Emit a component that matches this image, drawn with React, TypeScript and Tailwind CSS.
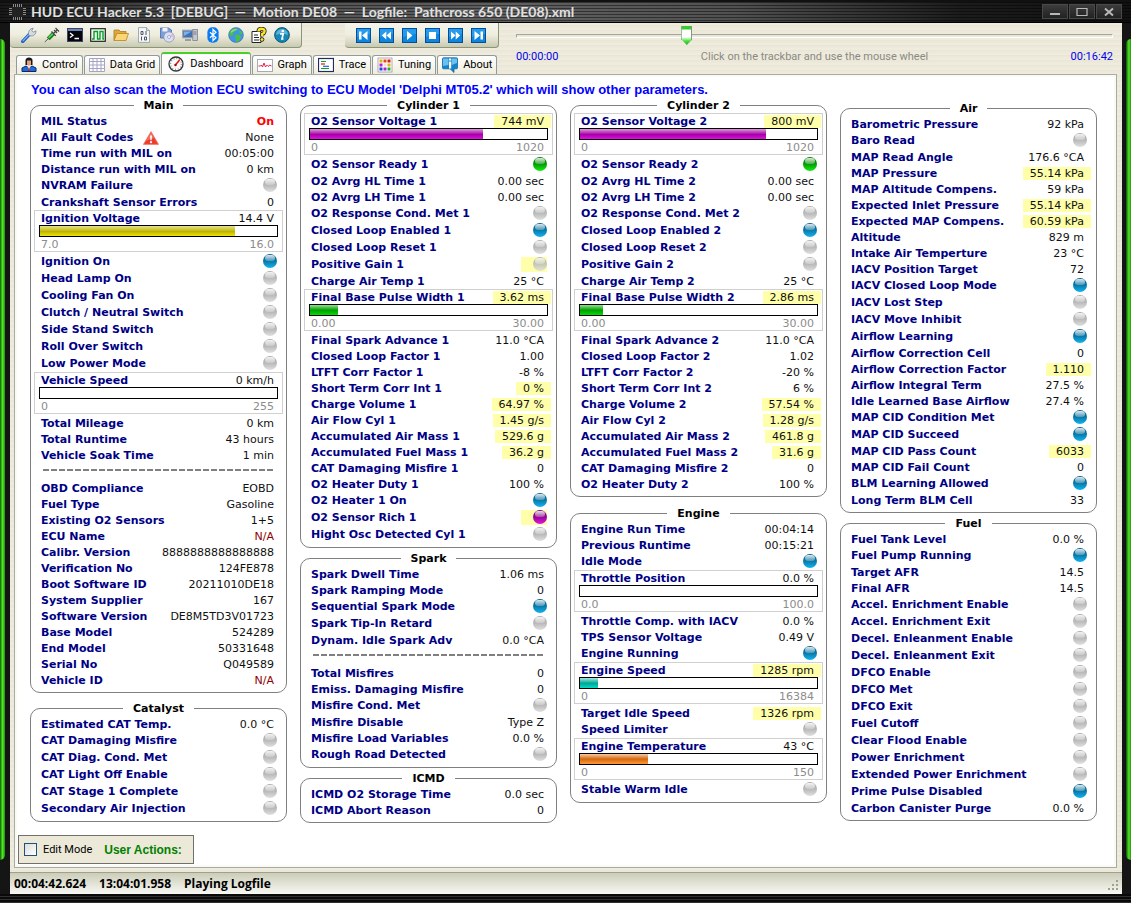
import { useState } from 'react';
import type { ReactNode } from 'react';

type LedColor = 'gray' | 'blue' | 'green' | 'purple';
type FillColor = 'yellow' | 'purple' | 'green' | 'teal' | 'orange';
type Tone = 'normal' | 'alert' | 'missing';

type Row =
  | { kind: 'text'; label: string; value: string; hot: boolean; tone: Tone; warn?: boolean }
  | { kind: 'led'; label: string; color: LedColor; hot: boolean }
  | { kind: 'bar'; label: string; value: string; min: string; max: string; percent: number; fill: FillColor; hot: boolean }
  | { kind: 'line' };

const text = (label: string, value: string, hot = false): Row => ({ kind: 'text', label, value, hot, tone: value === 'N/A' ? 'missing' : 'normal' });
const led = (label: string, color: LedColor = 'gray', hot = false): Row => ({ kind: 'led', label, color, hot });
const bar = (label: string, value: string, min: string, max: string, percent: number, fill: FillColor, hot = false): Row => ({ kind: 'bar', label, value, min, max, percent, fill, hot });
const line: Row = { kind: 'line' };

const main: Row[] = [
  { kind: 'text', label: 'MIL Status', value: 'On', hot: false, tone: 'alert' },
  { kind: 'text', label: 'All Fault Codes', value: 'None', hot: false, tone: 'normal', warn: true },
  text('Time run with MIL on', '00:05:00'),
  text('Distance run with MIL on', '0 km'),
  led('NVRAM Failure'),
  text('Crankshaft Sensor Errors', '0'),
  bar('Ignition Voltage', '14.4 V', '7.0', '16.0', 82.2, 'yellow'),
  led('Ignition On', 'blue'),
  led('Head Lamp On'),
  led('Cooling Fan On'),
  led('Clutch / Neutral Switch'),
  led('Side Stand Switch'),
  led('Roll Over Switch'),
  led('Low Power Mode'),
  bar('Vehicle Speed', '0 km/h', '0', '255', 0, 'green'),
  text('Total Mileage', '0 km'),
  text('Total Runtime', '43 hours'),
  text('Vehicle Soak Time', '1 min'),
  line,
  text('OBD Compliance', 'EOBD'),
  text('Fuel Type', 'Gasoline'),
  text('Existing O2 Sensors', '1+5'),
  text('ECU Name', 'N/A'),
  text('Calibr. Version', '8888888888888888'),
  text('Verification No', '124FE878'),
  text('Boot Software ID', '20211010DE18'),
  text('System Supplier', '167'),
  text('Software Version', 'DE8M5TD3V01723'),
  text('Base Model', '524289'),
  text('End Model', '50331648'),
  text('Serial No', 'Q049589'),
  text('Vehicle ID', 'N/A'),
];

const catalyst: Row[] = [
  text('Estimated CAT Temp.', '0.0 °C'),
  led('CAT Damaging Misfire'),
  led('CAT Diag. Cond. Met'),
  led('CAT Light Off Enable'),
  led('CAT Stage 1 Complete'),
  led('Secondary Air Injection'),
];

const cylinder1: Row[] = [
  bar('O2 Sensor Voltage 1', '744 mV', '0', '1020', 72.9, 'purple', true),
  led('O2 Sensor Ready 1', 'green'),
  text('O2 Avrg HL Time 1', '0.00 sec'),
  text('O2 Avrg LH Time 1', '0.00 sec'),
  led('O2 Response Cond. Met 1'),
  led('Closed Loop Enabled 1', 'blue'),
  led('Closed Loop Reset 1'),
  led('Positive Gain 1', 'gray', true),
  text('Charge Air Temp 1', '25 °C'),
  bar('Final Base Pulse Width 1', '3.62 ms', '0.00', '30.00', 12, 'green', true),
  text('Final Spark Advance 1', '11.0 °CA'),
  text('Closed Loop Factor 1', '1.00'),
  text('LTFT Corr Factor 1', '-8 %'),
  text('Short Term Corr Int 1', '0 %', true),
  text('Charge Volume 1', '64.97 %', true),
  text('Air Flow Cyl 1', '1.45 g/s', true),
  text('Accumulated Air Mass 1', '529.6 g', true),
  text('Accumulated Fuel Mass 1', '36.2 g', true),
  text('CAT Damaging Misfire 1', '0'),
  text('O2 Heater Duty 1', '100 %'),
  led('O2 Heater 1 On', 'blue'),
  led('O2 Sensor Rich 1', 'purple', true),
  led('Hight Osc Detected Cyl 1'),
];

const spark: Row[] = [
  text('Spark Dwell Time', '1.06 ms'),
  text('Spark Ramping Mode', '0'),
  led('Sequential Spark Mode', 'blue'),
  led('Spark Tip-In Retard'),
  text('Dynam. Idle Spark Adv', '0.0 °CA'),
  line,
  text('Total Misfires', '0'),
  text('Emiss. Damaging Misfire', '0'),
  led('Misfire Cond. Met'),
  text('Misfire Disable', 'Type Z'),
  text('Misfire Load Variables', '0.0 %'),
  led('Rough Road Detected'),
];

const icmd: Row[] = [text('ICMD O2 Storage Time', '0.0 sec'), text('ICMD Abort Reason', '0')];

const cylinder2: Row[] = [
  bar('O2 Sensor Voltage 2', '800 mV', '0', '1020', 78.4, 'purple', true),
  led('O2 Sensor Ready 2', 'green'),
  text('O2 Avrg HL Time 2', '0.00 sec'),
  text('O2 Avrg LH Time 2', '0.00 sec'),
  led('O2 Response Cond. Met 2'),
  led('Closed Loop Enabled 2', 'blue'),
  led('Closed Loop Reset 2'),
  led('Positive Gain 2'),
  text('Charge Air Temp 2', '25 °C'),
  bar('Final Base Pulse Width 2', '2.86 ms', '0.00', '30.00', 9.5, 'green', true),
  text('Final Spark Advance 2', '11.0 °CA'),
  text('Closed Loop Factor 2', '1.02'),
  text('LTFT Corr Factor 2', '-20 %'),
  text('Short Term Corr Int 2', '6 %'),
  text('Charge Volume 2', '57.54 %', true),
  text('Air Flow Cyl 2', '1.28 g/s', true),
  text('Accumulated Air Mass 2', '461.8 g', true),
  text('Accumulated Fuel Mass 2', '31.6 g', true),
  text('CAT Damaging Misfire 2', '0'),
  text('O2 Heater Duty 2', '100 %'),
];

const engine: Row[] = [
  text('Engine Run Time', '00:04:14'),
  text('Previous Runtime', '00:15:21'),
  led('Idle Mode', 'blue'),
  bar('Throttle Position', '0.0 %', '0.0', '100.0', 0, 'green'),
  text('Throttle Comp. with IACV', '0.0 %'),
  text('TPS Sensor Voltage', '0.49 V'),
  led('Engine Running', 'blue'),
  bar('Engine Speed', '1285 rpm', '0', '16384', 7.8, 'teal', true),
  text('Target Idle Speed', '1326 rpm', true),
  led('Speed Limiter'),
  bar('Engine Temperature', '43 °C', '0', '150', 28.7, 'orange'),
  led('Stable Warm Idle'),
];

const air: Row[] = [
  text('Barometric Pressure', '92 kPa'),
  led('Baro Read'),
  text('MAP Read Angle', '176.6 °CA'),
  text('MAP Pressure', '55.14 kPa', true),
  text('MAP Altitude Compens.', '59 kPa'),
  text('Expected Inlet Pressure', '55.14 kPa', true),
  text('Expected MAP Compens.', '60.59 kPa', true),
  text('Altitude', '829 m'),
  text('Intake Air Temperture', '23 °C'),
  text('IACV Position Target', '72'),
  led('IACV Closed Loop Mode', 'blue'),
  led('IACV Lost Step'),
  led('IACV Move Inhibit'),
  led('Airflow Learning', 'blue'),
  text('Airflow Correction Cell', '0'),
  text('Airflow Correction Factor', '1.110', true),
  text('Airflow Integral Term', '27.5 %'),
  text('Idle Learned Base Airflow', '27.4 %'),
  led('MAP CID Condition Met', 'blue'),
  led('MAP CID Succeed', 'blue'),
  text('MAP CID Pass Count', '6033', true),
  text('MAP CID Fail Count', '0'),
  led('BLM Learning Allowed', 'blue'),
  text('Long Term BLM Cell', '33'),
];

const fuel: Row[] = [
  text('Fuel Tank Level', '0.0 %'),
  led('Fuel Pump Running', 'blue'),
  text('Target AFR', '14.5'),
  text('Final AFR', '14.5'),
  led('Accel. Enrichment Enable'),
  led('Accel. Enrichment Exit'),
  led('Decel. Enleanment Enable'),
  led('Decel. Enleanment Exit'),
  led('DFCO Enable'),
  led('DFCO Met'),
  led('DFCO Exit'),
  led('Fuel Cutoff'),
  led('Clear Flood Enable'),
  led('Power Enrichment'),
  led('Extended Power Enrichment'),
  led('Prime Pulse Disabled', 'blue'),
  text('Carbon Canister Purge', '0.0 %'),
];

const ledClass: Record<LedColor, string> = {
  gray: 'bg-[linear-gradient(#acacac,#b8b8b8_50%,#e0e0e0)]',
  blue: 'bg-[linear-gradient(#0a5f86,#0878a8_50%,#12b4f0)]',
  green: 'bg-[linear-gradient(#067a06,#069a06_50%,#10f010)]',
  purple: 'bg-[linear-gradient(#6c066c,#960696_50%,#e412e4)]',
};

const fillClass: Record<FillColor, string> = {
  yellow: 'bg-[linear-gradient(#e6e28c,#c8bf1e_45%,#bdb400_55%,#f0e40c)]',
  purple: 'bg-[linear-gradient(#dc9cdc,#b01eb0_45%,#a800a8_55%,#e010e0)]',
  green: 'bg-[linear-gradient(#94e094,#14a814_45%,#00a400_55%,#04dc04)]',
  teal: 'bg-[linear-gradient(#a4e8e0,#14b0a0_45%,#00a898_55%,#04dcc8)]',
  orange: 'bg-[linear-gradient(#f8cca4,#d67424_45%,#d86c10_55%,#ff9838)]',
};

const toneClass: Record<Tone, string> = {
  normal: 'text-[#101010]',
  alert: 'font-bold text-[#ff0000]',
  missing: 'text-[#900000]',
};

const Led = ({ color }: { color: LedColor }) => (
  <span className={`flex size-[14px] justify-center rounded-full pt-px ${ledClass[color]}`}>
    <span className="h-[6px] w-[10px] rounded-full bg-linear-to-b from-white/85 to-white/25" />
  </span>
);

const WarnIcon = () => (
  <svg viewBox="0 0 16 14" className="h-[14px] w-4">
    <path d="M8 .6 15.6 13.4H.4Z" fill="#ee3b2c" stroke="#f08070" strokeWidth=".8" strokeLinejoin="round" />
    <path d="M8 1.5 11 7Q7 8 3 10Z" fill="#f98878" opacity=".7" />
    <path d="M7 4.5h2l-.4 4.8H7.4Z" fill="#fff" />
    <circle cx="8" cy="11.2" r="1.1" fill="#fff" />
  </svg>
);

const Value = ({ value, hot, tone = 'normal' }: { value: string; hot: boolean; tone?: Tone }) => (
  <dd className={`mt-px h-[13px] px-[7px] leading-[14px] ${toneClass[tone]} ${hot ? 'bg-[#ffffaa]' : ''}`}>{value}</dd>
);

const RowView = ({ row }: { row: Row }) => {
  if (row.kind === 'line') {
    return (
      <div className="h-[17px] px-3 pt-[6px]">
        <hr className="h-[2px] border-0 bg-[repeating-linear-gradient(90deg,#808080_0_6px,transparent_6px_8px)]" />
      </div>
    );
  }
  if (row.kind === 'bar') {
    return (
      <div className="mx-[3px] mb-px h-[42px] border border-[#d0d0d0]">
        <div className="flex h-[14px] items-start justify-between pr-px pl-[6px]">
          <dt className="leading-4 font-bold text-[#000084]">{row.label}</dt>
          <Value value={row.value} hot={row.hot} />
        </div>
        <dd className="mx-1 h-[12px] border border-black bg-white">
          <div className={`h-full ${fillClass[row.fill]}`} style={{ width: `${row.percent}%` }} />
        </dd>
        <dd className="flex h-[14px] justify-between pr-2 pl-[6px] leading-4 text-[#8c8c8c]">
          <span>{row.min}</span>
          <span>{row.max}</span>
        </dd>
      </div>
    );
  }
  if (row.kind === 'led') {
    return (
      <div className="flex h-[17px] items-start justify-between pr-[9px] pl-[10px]">
        <dt className="leading-[18px] font-bold text-[#000084]">{row.label}</dt>
        <dd className={`mt-px flex h-[15px] justify-end ${row.hot ? 'w-[26px] bg-[#ffffaa]' : ''}`}>
          <span className={row.hot && row.color === 'gray' ? 'opacity-80' : ''}>
            <Led color={row.color} />
          </span>
        </dd>
      </div>
    );
  }
  return (
    <div className="flex h-4 items-start justify-between pr-[5px] pl-[10px]">
      <dt className="flex items-center gap-[10px] leading-[18px] font-bold text-[#000084]">
        {row.label}
        {row.warn && <WarnIcon />}
      </dt>
      <div className="pt-px">
        <Value value={row.value} hot={row.hot} tone={row.tone} />
      </div>
    </div>
  );
};

const Group = ({ title, rows }: { title: string; rows: Row[] }) => (
  <fieldset className="min-w-0 rounded-[10px] border border-[#808080] pb-1">
    <legend className="mx-auto h-4 px-[10px] leading-[18px] font-bold text-black">{title}</legend>
    <dl className="whitespace-nowrap">
      {rows.map((row, i) => <RowView key={i} row={row} />)}
    </dl>
  </fieldset>
);

const Icon = ({ children }: { children: ReactNode }) => (
  <svg viewBox="0 0 16 16" className="size-4 shrink-0">{children}</svg>
);

const tools: { name: string; art: ReactNode }[] = [
  {
    name: 'Settings',
    art: (
      <>
        <path d="M1.8 14.4 8.6 7.2" stroke="#1d5fc4" strokeWidth="3.4" strokeLinecap="round" />
        <path d="M2 13.8 7.5 8" stroke="#7fb4f4" strokeWidth="1.2" strokeLinecap="round" />
        <path d="M7.6 8.2C6.8 5 8.6 1.4 12.2 1.3L10.8 3.7 12.3 5.2 15 3.8C15.2 7.2 12.2 9.6 9.2 8.8Z" fill="#d4dbe4" stroke="#7a8796" strokeWidth=".8" />
      </>
    ),
  },
  {
    name: 'Connect',
    art: (
      <>
        <path d="M.8 15 5 11" stroke="#555" strokeWidth="1" />
        <path d="M4.2 11.8 9.5 6.5" stroke="#1c7a24" strokeWidth="4" />
        <path d="M4.6 10.8 9 6.5" stroke="#58dc58" strokeWidth="1.6" />
        <path d="M7.5 4.5 11.8 8.8M9.5 6.5 13.5 2.6M11.5 1 15 4.5M10 3l3 3" stroke="#444" strokeWidth="1.2" />
      </>
    ),
  },
  {
    name: 'Console',
    art: (
      <>
        <rect x=".5" y="1.5" width="15" height="13" fill="#05050c" stroke="#3d4660" />
        <path d="M1 2h14v2H1Z" fill="#6f86b8" />
        <path d="m3 6 3 2.3-3 2.3M7.5 11.5H12" fill="none" stroke="#fff" strokeWidth="1.3" />
      </>
    ),
  },
  {
    name: 'Oscilloscope',
    art: (
      <>
        <rect x=".7" y="1.7" width="14.6" height="12.6" fill="#f0fff0" stroke="#222" strokeWidth="1.2" />
        <path d="M2 12h2V4.5h3.5V12H10V4.5h3V12h1" fill="none" stroke="#0a9a28" strokeWidth="1.4" />
      </>
    ),
  },
  {
    name: 'Open',
    art: (
      <>
        <path d="M1 13.5V3.5Q1 3 1.5 3H6l1.5 1.5H13V7" fill="#e0a83a" stroke="#a87820" strokeWidth=".8" />
        <path d="M1 13.5 3.8 6.5H15.5L13 13.5Z" fill="#fbd676" stroke="#b88420" strokeWidth=".8" />
      </>
    ),
  },
  {
    name: 'Binary',
    art: (
      <>
        <path d="M2.5.6H10.5L13.5 3.6V15.4H2.5Z" fill="#f4f7f8" stroke="#8a9a9c" strokeWidth=".8" />
        <path d="M10.5.6V3.6H13.5" fill="#d0dcdc" stroke="#8a9a9c" strokeWidth=".8" />
        <path d="M5 4.5h2v3H5ZM10 4v4M5.5 9.5v4M8.5 10h2v3h-2Z" fill="none" stroke="#556" strokeWidth="1" />
      </>
    ),
  },
  {
    name: 'Save disc',
    art: (
      <>
        <path d="M1.5 1h8l3 2v8h-11Z" fill="#7da0dc" stroke="#4a68a8" strokeWidth=".8" />
        <path d="M3.5 1h5v3.5h-5Z" fill="#f2f4fa" />
        <circle cx="10" cy="10" r="5.2" fill="#d8e0f4" stroke="#8a96b4" strokeWidth=".8" />
        <path d="M10 10 13.5 6.5A5 5 0 0 1 15 10Z" fill="#e8b4e0" />
        <circle cx="10" cy="10" r="1.5" fill="#fff" stroke="#8a96b4" strokeWidth=".7" />
      </>
    ),
  },
  {
    name: 'Computer',
    art: (
      <>
        <rect x=".8" y="3.3" width="10" height="7.4" fill="#3c74b8" stroke="#99a" strokeWidth="1.2" />
        <path d="M2 4.5h7.5L2 9Z" fill="#7fb0e4" />
        <path d="M3 13h6" stroke="#8a8f98" strokeWidth="1.6" />
        <rect x="10.8" y="2.5" width="4.6" height="11" fill="#c4c8d0" stroke="#7c828c" strokeWidth=".8" />
        <path d="M11.5 5h3M11.5 7h3" stroke="#667" strokeWidth=".8" />
      </>
    ),
  },
  {
    name: 'Bluetooth',
    art: (
      <>
        <rect x="2.4" y=".3" width="11.2" height="15.4" rx="5" fill="#0b7bf0" />
        <path d="m5 5.300 6 5.400-3 2.800V2.500l3 2.800-6 5.400" fill="none" stroke="#fff" strokeWidth="1.2" />
      </>
    ),
  },
  {
    name: 'Online',
    art: (
      <>
        <circle cx="8" cy="8" r="7.4" fill="#3f93e8" stroke="#3a6a9c" strokeWidth=".6" />
        <path d="M2 4.5Q5 .8 9 1.2L8 4 5 5.5 5.5 8 2.5 9Q.5 7 2 4.5ZM7 8l4-.5 2 2.5-2.5 4.5L8 14.8 7.5 11ZM11 3l3 2v2.5l-2.5-1Z" fill="#4cc040" />
        <path d="M3 4Q6 1 10 2.5 6 3 3 6Z" fill="#fff" opacity=".4" />
      </>
    ),
  },
  {
    name: 'Help',
    art: (
      <>
        <path d="M1 4.5h9v11H1Z" fill="#fff" stroke="#222" strokeWidth="1" />
        <path d="M3 8h4M3 10.5h5M3 13h5" stroke="#222" strokeWidth="1" />
        <path d="M7.5 4.5Q7.5 1.8 10.8 1.8 14 2 13.5 4.8 13.2 6.5 11 7.2V9.2" fill="none" stroke="#222" strokeWidth="4" />
        <path d="M7.5 4.5Q7.5 1.8 10.8 1.8 14 2 13.5 4.8 13.2 6.5 11 7.2V9" fill="none" stroke="#ffe620" strokeWidth="2.4" />
        <circle cx="11" cy="12.5" r="1.9" fill="#ffe620" stroke="#222" strokeWidth=".9" />
      </>
    ),
  },
  {
    name: 'Info',
    art: (
      <>
        <circle cx="8" cy="8" r="7.4" fill="#1488b8" stroke="#0f4c68" strokeWidth=".9" />
        <path d="M2 8A6 6 0 0 1 14 8Q8 5 2 8Z" fill="#8ad4ee" opacity=".6" />
        <circle cx="8.8" cy="4" r="1.3" fill="#fff" />
        <path d="M6 6.8h3.2L8 12h1.5" fill="none" stroke="#fff" strokeWidth="1.7" />
      </>
    ),
  },
];

const players: { name: string; d: string }[] = [
  { name: 'First', d: 'M3 3.5h2.5v8H3ZM11.5 3v9L6 7.5Z' },
  { name: 'Rewind', d: 'M7.3 3.5v8L2.8 7.5ZM12 3.5v8L7.5 7.5Z' },
  { name: 'Play', d: 'M5 3v9l5.5-4.5Z' },
  { name: 'Stop', d: 'M4 4h7v7H4Z' },
  { name: 'Forward', d: 'M3 3.5v8l4.5-4ZM7.7 3.5v8l4.5-4Z' },
  { name: 'Last', d: 'M3.5 3v9L9 7.5ZM9.5 3.5H12v8H9.500Z' },
];

const tabs: { name: string; art: ReactNode }[] = [
  {
    name: 'Control',
    art: (
      <>
        <path d="M4.5 8V3Q5 .5 8 .5T11.5 3V8Z" fill="#16161e" />
        <path d="M6 3.5h4V7.5L8 9 6 7.5Z" fill="#e8a070" />
        <path d="M1 14.500V11L5 9 8 11 11 9 15 11V14.500Z" fill="#1c6ce0" stroke="#10285c" strokeWidth="1" />
        <path d="M6.5 9.5h3L8 13Z" fill="#fff" />
        <path d="M8 10.5V14" stroke="#d01818" strokeWidth="1.2" />
      </>
    ),
  },
  {
    name: 'Data Grid',
    art: <path d="M.5 1.5h15v13H.5ZM.5 4.5h15M.5 8h15M.5 11.5h15M4 1.5v13M8 1.5v13M12 1.5v13" fill="#fff" stroke="#a4a4c4" strokeWidth="1" />,
  },
  {
    name: 'Dashboard',
    art: (
      <>
        <circle cx="8" cy="8" r="7" fill="#fafafa" stroke="#333" strokeWidth="1.3" />
        <circle cx="8" cy="8" r="5.4" fill="none" stroke="#777" strokeWidth="1.2" strokeDasharray=".8 2" />
        <path d="M7 9.5 11.5 4" stroke="#e01010" strokeWidth="1.5" />
        <circle cx="7.5" cy="9" r="1.2" fill="#a00" />
      </>
    ),
  },
  {
    name: 'Graph',
    art: (
      <>
        <rect x=".5" y="2.5" width="15" height="12" fill="#fff" stroke="#aab" />
        <path d="M1.5 9h2l1-1 1 2 1.5-4L8.500 10l1-1.500h1l1 1 1-1.500 2 1" fill="none" stroke="#e0204c" strokeWidth="1" />
      </>
    ),
  },
  {
    name: 'Trace',
    art: (
      <>
        <rect x=".5" y="1.5" width="15" height="13" fill="#fff" stroke="#222a60" strokeWidth="1.2" />
        <path d="M3 4.5h5M3 11.5h8" stroke="#10a020" strokeWidth="1.2" />
        <path d="M3 7h4" stroke="#d01818" strokeWidth="1.2" />
        <path d="M5 9.3h6" stroke="#1868d8" strokeWidth="1.2" />
      </>
    ),
  },
  {
    name: 'Tuning',
    art: (
      <>
        <rect x="1" y="1" width="14" height="14" fill="#fff" stroke="#99a" strokeWidth=".8" />
        <path d="M2.5 2.5h3v3h-3ZM10.5 6.5h3v3h-3Z" fill="#e8b010" />
        <path d="M6.5 2.5h3v3h-3Z" fill="#e84810" />
        <path d="M10.5 2.5h3v3h-3Z" fill="#e01818" />
        <path d="M2.5 6.5h3v3h-3ZM6.5 10.5h3v3h-3Z" fill="#b020d0" />
        <path d="M6.5 6.5h3v3h-3Z" fill="#e4e4e4" />
        <path d="M2.5 10.5h3v3h-3Z" fill="#1848e0" />
        <path d="M10.5 10.5h3v3h-3Z" fill="#18b028" />
      </>
    ),
  },
  {
    name: 'About',
    art: (
      <>
        <path d="M1.500.8h13q1 0 1 1v9q0 1-1 1H12V15.500L8 11.800H1.500q-1 0-1-1v-9q0-1 1-1Z" fill="#1583cc" stroke="#1468a0" strokeWidth=".8" />
        <path d="M1 1.5h5.500V8L1 9ZM9.700 1.500H15V6L9.700 8Z" fill="#7fd0f8" opacity=".8" />
        <path d="M7 1.5h2.200v2H7ZM7 4.5h2.200v7H7Z" fill="#fff" />
      </>
    ),
  },
];

const WindowButton = ({ label, children }: { label: string; children: ReactNode }) => (
  <button aria-label={label} className="flex h-[15px] w-[26px] items-center justify-center border border-[#484848] bg-linear-to-b from-[#3c3c3c] to-[#222]">
    <svg viewBox="0 0 12 10" className="h-[10px] w-3" fill="none" stroke="#b8b8b8">{children}</svg>
  </button>
);

const ToolPanel = ({ children }: { children: ReactNode }) => (
  <div className="flex h-[25px] items-center rounded-b-[4px] border-r border-b border-[#8a9678] bg-linear-to-b from-[#f6f5ee] via-[#eeedde] to-[#c9cab2]">{children}</div>
);

const TitleBar = () => (
  <header className="flex h-[23px] items-center justify-between bg-[repeating-linear-gradient(transparent_0_2px,rgba(0,0,0,0.45)_2px_3px),linear-gradient(90deg,#181818,#4a4a4a_15%,#606060_45%,#505050_65%,#1c1c1c_85%,#111)] pr-[9px] pl-[9px] shadow-[inset_0_2px_0_#111,inset_0_-1px_0_#000]">
    <div className="flex items-center gap-[5px]">
      <svg viewBox="0 0 17 16" className="h-4 w-[17px]">
        <path d="M4.5 0v16M6.5 0v16M8.5 0v16M10.5 0v16M12.5 0v16M0 4.5h17M0 6.5h17M0 8.5h17M0 10.5h17" stroke="#aaa" strokeWidth=".8" />
        <rect x="3" y="3" width="11" height="10" fill="#222" />
      </svg>
      <h1 className="font-[Lato,'Open_Sans',sans-serif] text-[14px] leading-5 font-bold whitespace-pre text-[#e0e0e0]">
        {'HUD ECU Hacker 5.3  [DEBUG]  —  Motion DE08  —  Logfile:  Pathcross 650 (DE08).xml'}
      </h1>
    </div>
    <div className="flex gap-px">
      <WindowButton label="Minimize"><path d="M1 7h10" strokeWidth="2" /></WindowButton>
      <WindowButton label="Maximize"><path d="M1 1.5h10v7H1Z" strokeWidth="1.2" /></WindowButton>
      <WindowButton label="Close"><path d="m2 1.5 8 7M10 1.5l-8 7" strokeWidth="2" /></WindowButton>
    </div>
  </header>
);

const App = () => {
  const [active, setActive] = useState('Dashboard');
  const [position, setPosition] = useState(282);
  const [editMode, setEditMode] = useState(false);

  return (
    <div className="flex min-h-screen flex-col bg-[#151515] font-['DejaVu_Sans',Verdana,sans-serif] text-[11px] leading-[14px]">
      <TitleBar />

      <div className="flex flex-1">
        {/* Left window frame */}
        <div className="w-[10px] shrink-0 pt-4 pb-[34px]">
          <div className="h-full w-[5px] rounded-r-[5px] bg-[linear-gradient(90deg,#0c5c04,#50e820_50%,#209010)]" />
        </div>

        <main className="flex min-w-0 flex-1 flex-col bg-[#ece9d8] bg-[repeating-linear-gradient(#efecdf_0_2px,#e9e6d4_2px_3px,#ede9da_3px_5px)]">
          <div className="flex">
            <div className="w-[489px] shrink-0">
              <div className="flex justify-between">
                <ToolPanel>
                  <div className="flex gap-[7px] pr-[11px] pl-[11px]">
                    {tools.map(tool => (
                      <button key={tool.name} aria-label={tool.name}><Icon>{tool.art}</Icon></button>
                    ))}
                  </div>
                </ToolPanel>
                <ToolPanel>
                  <div className="flex gap-2 pr-3 pl-[11px]">
                    {players.map(player => (
                      <button key={player.name} aria-label={player.name}>
                        <svg viewBox="0 0 15 15" className="size-[15px]">
                          <rect x=".5" y=".5" width="14" height="14" fill="#0c86e0" stroke="#084c94" />
                          <path d="M1 1h13v5Q7 6 1 9Z" fill="#3cb0f8" opacity=".5" />
                          <path d={player.d} fill="#fff" />
                        </svg>
                      </button>
                    ))}
                  </div>
                </ToolPanel>
              </div>

              <nav className="flex h-[26px] items-end gap-px pl-[6px] font-[Roboto,'Liberation_Sans',sans-serif] text-[11px] whitespace-nowrap text-black">
                {tabs.map(tab => (
                  <button
                    key={tab.name}
                    onClick={() => setActive(tab.name)}
                    className={
                      active === tab.name
                        ? '-mb-px flex h-[23px] items-center gap-[6px] rounded-t-[3px] border border-t-2 border-b-0 border-[#919b9c] border-t-[#48d028] bg-[#fcfcfc] px-[6px] pb-[2px]'
                        : 'flex h-[19px] items-center gap-[5px] rounded-t-[3px] border border-b-0 border-[#919b9c] bg-linear-to-b from-white to-[#efedde] px-1'
                    }
                  >
                    <Icon>{tab.art}</Icon>
                    {tab.name}
                  </button>
                ))}
              </nav>
            </div>

            {/* Logfile position */}
            <div className="min-w-0 flex-1 pr-[9px] pl-[17px] font-[Roboto,'Liberation_Sans',sans-serif] text-[11px]">
              <input
                type="range"
                min={0}
                max={1002}
                value={position}
                onChange={e => setPosition(Number(e.target.value))}
                aria-label="Logfile position"
                className="mt-[3px] block h-5 w-full appearance-none bg-transparent [&::-webkit-slider-runnable-track]:h-[4px] [&::-webkit-slider-runnable-track]:border [&::-webkit-slider-runnable-track]:border-[#a4a69c] [&::-webkit-slider-runnable-track]:border-r-white [&::-webkit-slider-runnable-track]:border-b-white [&::-webkit-slider-thumb]:-mt-[9px] [&::-webkit-slider-thumb]:h-[19px] [&::-webkit-slider-thumb]:w-[11px] [&::-webkit-slider-thumb]:appearance-none [&::-webkit-slider-thumb]:bg-[linear-gradient(90deg,#7c9c7c_0_1px,transparent_1px_10px,#7c9c7c_10px),linear-gradient(#38c830_0_3px,#fff_4px_11px,#48e038_15px,#30a828)] [&::-webkit-slider-thumb]:[clip-path:polygon(0_0,100%_0,100%_70%,50%_100%,0_70%)]"
              />
              <div className="flex justify-between pt-1">
                <span className="text-[#0000f0]">00:00:00</span>
                <span className="text-[#8a8a84]">Click on the trackbar and use the mouse wheel</span>
                <span className="text-[#0000f0]">00:16:42</span>
              </div>
            </div>
          </div>

          <section className="mr-[5px] ml-1 flex-1 border border-[#a8aaa4] bg-white pt-[7px] shadow-[inset_0_0_0_2px_#fafaf5]">
            <h2 className="h-[15px] pl-4 font-['Liberation_Sans',Arial,sans-serif] text-[13px] leading-4 font-bold text-[#0000ff]">
              You can also scan the Motion ECU switching to ECU Model 'Delphi MT05.2' which will show other parameters.
            </h2>
            <div className="grid grid-cols-4 items-start gap-[13px] pr-[19px] pl-[15px]">
              <div className="flex min-w-0 flex-col gap-[7px]">
                <Group title="Main" rows={main} />
                <Group title="Catalyst" rows={catalyst} />
              </div>
              <div className="flex min-w-0 flex-col gap-[2px]">
                <Group title="Cylinder 1" rows={cylinder1} />
                <Group title="Spark" rows={spark} />
                <Group title="ICMD" rows={icmd} />
              </div>
              <div className="flex min-w-0 flex-col gap-2">
                <Group title="Cylinder 2" rows={cylinder2} />
                <Group title="Engine" rows={engine} />
              </div>
              <div className="flex min-w-0 flex-col gap-[2px] pt-[3px]">
                <Group title="Air" rows={air} />
                <Group title="Fuel" rows={fuel} />
              </div>
            </div>

            <div className="mt-3 mb-[3px] ml-[3px] flex h-[29px] w-fit items-center border border-[#70706c] bg-[#ece9d8] pr-[11px] pl-[5px]">
              <label className="flex items-center gap-[6px] font-[Roboto,'Liberation_Sans',sans-serif] text-[11px] text-black">
                <input
                  type="checkbox"
                  checked={editMode}
                  onChange={e => setEditMode(e.target.checked)}
                  className="size-[13px] appearance-none border border-[#1c5180] bg-linear-to-br from-[#dcdcd7] to-white checked:bg-[#21a121]"
                />
                Edit Mode
              </label>
              <span className="pl-3 font-['Liberation_Sans',Arial,sans-serif] text-[12px] font-bold text-[#008000]">User Actions:</span>
            </div>
          </section>

          <footer className="mt-1 flex h-[22px] items-center justify-between border-t border-[#a0a090] bg-linear-to-b from-[#cccdb8] to-[#f8f8f4] pr-[3px] pl-1 font-['Open_Sans','Noto_Sans',sans-serif] text-[12px] font-bold text-black">
            <div className="flex gap-[13px]">
              <span>00:04:42.624</span>
              <span>13:04:01.958</span>
              <span>Playing Logfile</span>
            </div>
            <svg viewBox="0 0 11 11" className="mt-1 size-[11px]" fill="#a0a08c">
              <path d="M8 0h2v2H8ZM4 4h2v2H4ZM8 4h2v2H8ZM0 8h2v2H0ZM4 8h2v2H4ZM8 8h2v2H8Z" />
            </svg>
          </footer>
        </main>

        {/* Right window frame */}
        <div className="flex w-[9px] shrink-0 justify-end pt-4 pb-[34px]">
          <div className="h-full w-[5px] rounded-l-[5px] bg-[linear-gradient(90deg,#104008,#209010_20%,#50e820_60%,#2c8818)]" />
        </div>
      </div>

      <div className="h-[9px] bg-[repeating-linear-gradient(#0a0a0a_0_2px,#303030_2px_3px)]" />
    </div>
  );
};

export default App;
